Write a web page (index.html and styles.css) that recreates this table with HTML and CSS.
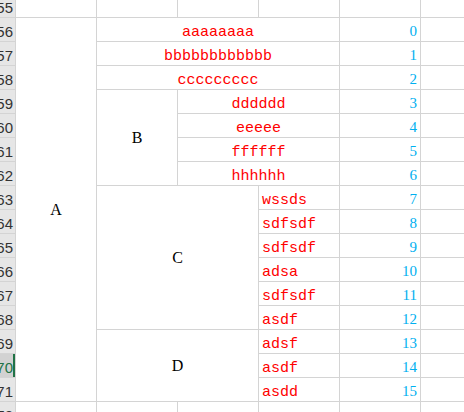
FILE: index.html
```html
<!DOCTYPE html>
<html>
<head>
<meta charset="utf-8">
<link rel="stylesheet" href="styles.css">
</head>
<body>
<div class="sheet">
  <!-- row 55 -->
  <div class="hd">55</div><div class="c"></div><div class="c"></div><div class="c"></div><div class="c"></div><div class="c"></div><div class="c"></div>
  <!-- row 56 -->
  <div class="hd">56</div>
  <div class="c lbl rows16">A</div>
  <div class="c ctr span3">aaaaaaaa</div><div class="c num">0</div><div class="c"></div>
  <!-- row 57 -->
  <div class="hd">57</div>
  <div class="c ctr span3">bbbbbbbbbbbb</div><div class="c num">1</div><div class="c"></div>
  <!-- row 58 -->
  <div class="hd">58</div>
  <div class="c ctr span3">ccccccccc</div><div class="c num">2</div><div class="c"></div>
  <!-- row 59 -->
  <div class="hd">59</div>
  <div class="c lbl rows4">B</div>
  <div class="c ctr span2">dddddd</div><div class="c num">3</div><div class="c"></div>
  <!-- row 60 -->
  <div class="hd">60</div>
  <div class="c ctr span2">eeeee</div><div class="c num">4</div><div class="c"></div>
  <!-- row 61 -->
  <div class="hd">61</div>
  <div class="c ctr span2">ffffff</div><div class="c num">5</div><div class="c"></div>
  <!-- row 62 -->
  <div class="hd">62</div>
  <div class="c ctr span2">hhhhhh</div><div class="c num">6</div><div class="c"></div>
  <!-- row 63 -->
  <div class="hd">63</div>
  <div class="c lbl span2 rows6">C</div>
  <div class="c">wssds</div><div class="c num">7</div><div class="c"></div>
  <!-- row 64 -->
  <div class="hd">64</div>
  <div class="c">sdfsdf</div><div class="c num">8</div><div class="c"></div>
  <!-- row 65 -->
  <div class="hd">65</div>
  <div class="c">sdfsdf</div><div class="c num">9</div><div class="c"></div>
  <!-- row 66 -->
  <div class="hd">66</div>
  <div class="c">adsa</div><div class="c num">10</div><div class="c"></div>
  <!-- row 67 -->
  <div class="hd">67</div>
  <div class="c">sdfsdf</div><div class="c num">11</div><div class="c"></div>
  <!-- row 68 -->
  <div class="hd">68</div>
  <div class="c">asdf</div><div class="c num">12</div><div class="c"></div>
  <!-- row 69 -->
  <div class="hd">69</div>
  <div class="c lbl span2 rows3">D</div>
  <div class="c">adsf</div><div class="c num">13</div><div class="c"></div>
  <!-- row 70 -->
  <div class="hd sel">70</div>
  <div class="c">asdf</div><div class="c num">14</div><div class="c"></div>
  <!-- row 71 -->
  <div class="hd">71</div>
  <div class="c">asdd</div><div class="c num">15</div><div class="c"></div>
  <!-- row 72 -->
  <div class="hd">72</div><div class="c"></div><div class="c"></div><div class="c"></div><div class="c"></div><div class="c"></div><div class="c"></div>
</div>
</body>
</html>
```

FILE: styles.css
```css
html, body {
  margin: 0;
  padding: 0;
  width: 464px;
  height: 412px;
  overflow: hidden;
  background: #ffffff;
}

.sheet {
  display: grid;
  grid-template-columns: 15px repeat(6, 80px);
  grid-template-rows: 17px repeat(17, 23px);
  gap: 1px;
  background: #d4d4d4;
  width: max-content;
}

.hd {
  background: #e6e6e6;
  display: flex;
  align-items: flex-end;
  justify-content: flex-end;
  padding: 0 2px 1px 0;
  overflow: hidden;
  white-space: nowrap;
  font-family: "Liberation Sans", Arial, sans-serif;
  font-size: 15px;
  color: #333333;
  min-width: 0;
}

.hd.sel {
  background: #d2d2d2;
  color: #217346;
  box-shadow: inset -2px 0 0 #217346;
}

.c {
  background: #ffffff;
  display: flex;
  align-items: flex-end;
  justify-content: flex-start;
  padding: 0 3px;
  overflow: hidden;
  white-space: nowrap;
  min-width: 0;
  font-family: "Liberation Mono", "DejaVu Sans Mono", monospace;
  font-size: 15px;
  color: #ff0000;
}

.ctr {
  justify-content: center;
}

.num {
  justify-content: flex-end;
  padding-bottom: 1px;
  font-family: "Liberation Serif", "Times New Roman", serif;
  font-size: 15px;
  color: #00b0f0;
}

.lbl {
  align-items: center;
  justify-content: center;
  font-family: "Liberation Serif", "Times New Roman", serif;
  font-size: 16px;
  color: #000000;
}

.span2 { grid-column: span 2; }
.span3 { grid-column: span 3; }
.rows3 { grid-row: span 3; }
.rows4 { grid-row: span 4; }
.rows6 { grid-row: span 6; }
.rows16 { grid-row: span 16; }
```
